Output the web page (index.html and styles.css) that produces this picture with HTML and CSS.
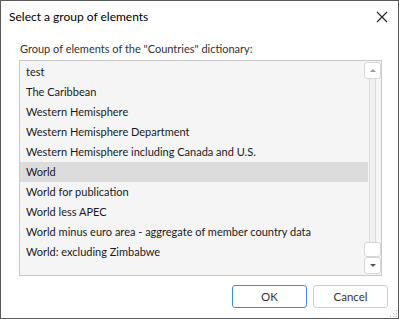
FILE: index.html
```html
<!DOCTYPE html>
<html lang="en">
<head>
  <meta charset="UTF-8">
  <title>Select a group of elements</title>
  <link rel="stylesheet" href="styles.css">
</head>
<body>
  <div class="dialog">
    <div class="titlebar">
      <span class="title">Select a group of elements</span>
      <svg class="close" width="12" height="12" viewBox="0 0 12 12">
        <path d="M1 1 L11 11 M11 1 L1 11" stroke="#222" stroke-width="1.1" fill="none"/>
      </svg>
    </div>
    <div class="content">
      <div class="label">Group of elements of the "Countries" dictionary:</div>
      <div class="listbox">
        <ul class="items">
          <li>test</li>
          <li>The Caribbean</li>
          <li>Western Hemisphere</li>
          <li>Western Hemisphere Department</li>
          <li>Western Hemisphere including Canada and U.S.</li>
          <li class="selected">World</li>
          <li>World for publication</li>
          <li>World less APEC</li>
          <li>World minus euro area - aggregate of member country data</li>
          <li>World: excluding Zimbabwe</li>
        </ul>
        <div class="scrollbar">
          <div class="sb-btn"><span class="arrow up"></span></div>
          <div class="sb-track"></div>
          <div class="sb-thumb"></div>
          <div class="sb-btn"><span class="arrow down"></span></div>
        </div>
      </div>
      <div class="buttons">
        <button class="btn btn-default">OK</button>
        <button class="btn">Cancel</button>
      </div>
    </div>
    <div class="grip"></div>
  </div>
</body>
</html>
```
FILE: styles.css
```css
/* Base */
html, body {
  margin: 0;
  padding: 0;
  background: #fff;
}

body {
  font-family: Lato, "Liberation Sans", sans-serif;
  font-size: 11px;
  color: #1a1a1a;
}

/* Dialog window */
.dialog {
  position: relative;
  box-sizing: border-box;
  width: 399px;
  height: 319px;
  border: 1px solid #5a5a5a;
  background: #fff;
  display: flex;
  flex-direction: column;
}

.titlebar {
  height: 31px;
  display: flex;
  align-items: center;
  justify-content: space-between;
  padding: 0 10px 0 8px;
}

.title {
  font-size: 12px;
  color: #000;
}

.close {
  display: block;
}

.content {
  flex: 1;
  display: flex;
  flex-direction: column;
  padding: 7px 16px 0 18px;
}

.label {
  height: 21px;
  line-height: 19px;
  padding-left: 1px;
  color: #333;
}

/* List */
.listbox {
  box-sizing: border-box;
  height: 216px;
  border: 1px solid #c8c8c8;
  background: #f5f5f5;
  display: flex;
}

.items {
  list-style: none;
  margin: 0;
  padding: 1px 0 0 0;
  flex: 1;
}

.items li {
  height: 20px;
  line-height: 20px;
  padding-left: 6px;
  white-space: nowrap;
}

.items li.selected {
  background: #dcdcdc;
}

/* Scrollbar */
.scrollbar {
  position: relative;
  width: 17px;
  margin-left: -4px;
  display: flex;
  flex-direction: column;
  align-items: center;
  padding: 1px 0;
}

.sb-btn,
.sb-thumb {
  box-sizing: border-box;
  width: 17px;
  height: 17px;
  border: 1px solid #d6d6d6;
  border-radius: 3px;
  background: #fff;
  display: flex;
  align-items: center;
  justify-content: center;
}

.sb-thumb {
  height: 15px;
}

.sb-track {
  flex: 1;
  box-sizing: border-box;
  width: 7px;
  border-left: 1px solid #dcdcdc;
  border-right: 1px solid #dcdcdc;
  background: #f0f0f0;
}

.arrow {
  width: 0;
  height: 0;
  border-left: 3px solid transparent;
  border-right: 3px solid transparent;
}

.arrow.up {
  border-bottom: 3px solid #9a9a9a;
}

.arrow.down {
  border-top: 3px solid #555;
}

/* Buttons */
.buttons {
  display: flex;
  justify-content: flex-end;
  gap: 6px;
  padding-top: 9px;
  margin-right: -6px;
}

.btn {
  box-sizing: border-box;
  width: 75px;
  height: 23px;
  border: 1px solid #cfcfcf;
  border-radius: 3px;
  background: #fff;
  font-family: Lato, "Liberation Sans", sans-serif;
  font-size: 11.5px;
  color: #333;
  padding: 0;
}

.btn-default {
  border-color: #3d8fd0;
}

/* Resize grip */
.grip {
  position: absolute;
  right: 1px;
  bottom: 1px;
  width: 8px;
  height: 8px;
  background-image: radial-gradient(circle, #b5b5b5 0.8px, transparent 1px);
  background-size: 3px 3px;
  clip-path: polygon(100% 0, 100% 100%, 0 100%);
}
```
